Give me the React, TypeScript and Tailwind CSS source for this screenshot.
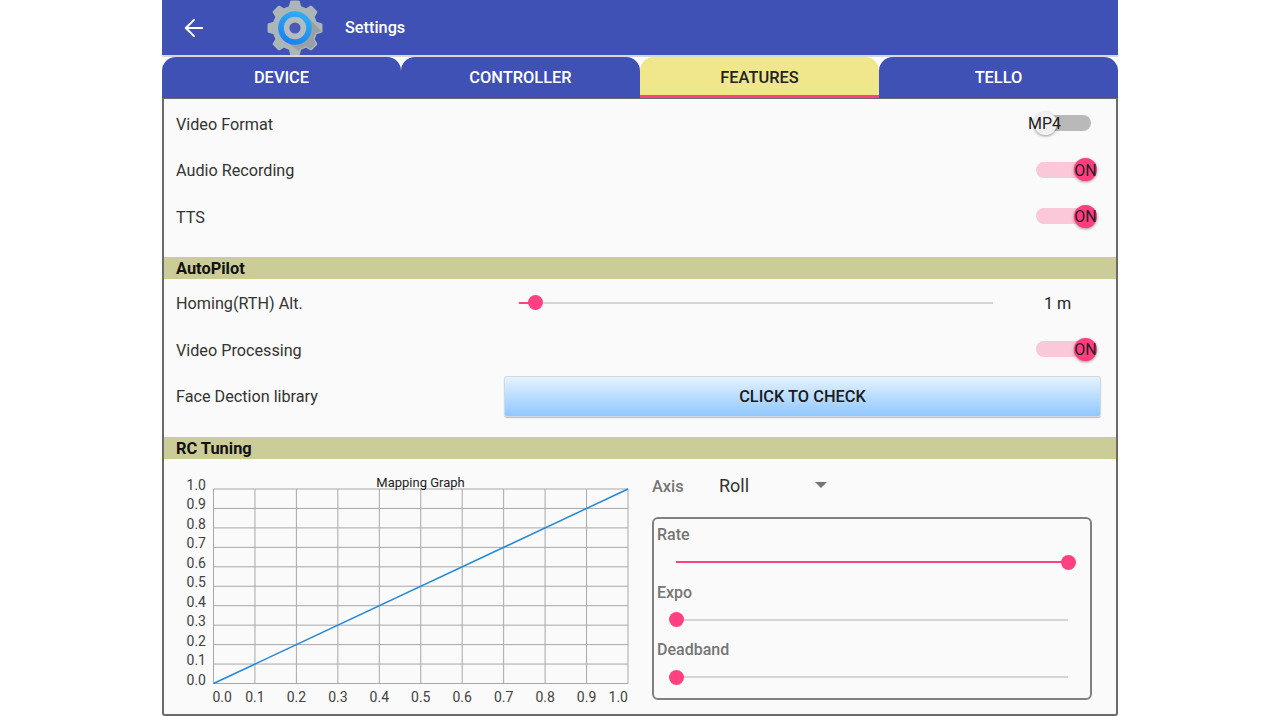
import React from 'react';
import { ArrowLeft } from 'lucide-react';

const FONT = 'font-["Roboto","Liberation_Sans",sans-serif]';

// 8 tooth gear outline around (50,50)
function gearPath() {
  const pts: string[] = [];
  const teeth = 8;
  for (let i = 0; i < teeth; i++) {
    const a = (i / teeth) * Math.PI * 2 - Math.PI / 2;
    const step = (Math.PI * 2) / teeth;
    const add = (r: number, o: number) => {
      pts.push(`${(50 + r * Math.cos(a + o)).toFixed(2)} ${(50 + r * Math.sin(a + o)).toFixed(2)}`);
    };
    add(38, -step * 0.3);
    add(47, -step * 0.17);
    add(47, step * 0.17);
    add(38, step * 0.3);
  }
  return 'M' + pts.join('L') + 'Z';
}

function GearLogo() {
  return (
    <svg viewBox="0 0 100 100" className="w-[56px] h-[56px]">
      <defs>
        <clipPath id="gear-clip">
          <path d={gearPath()} stroke="#000" strokeWidth="4" />
        </clipPath>
        <linearGradient id="ring" x1="0.7" y1="0" x2="0.3" y2="1">
          <stop offset="0" stopColor="#2fb0f7" />
          <stop offset="1" stopColor="#1a7ff0" />
        </linearGradient>
      </defs>
      <path d={gearPath()} fill="#abb6b9" stroke="#abb6b9" strokeWidth="5" strokeLinejoin="round" />
      <path d="M70 28 L100 58 L100 100 L70 100 L30 72 Z" fill="#8e999d" opacity="0.7" clipPath="url(#gear-clip)" />
      <circle cx="50" cy="50" r="30" fill="url(#ring)" />
      <circle cx="50" cy="50" r="20" fill="#b3bdc1" />
      <circle cx="50" cy="50" r="10" fill="#4c5ab3" />
    </svg>
  );
}

function Toggle({ label, on }: { label: string; on: boolean }) {
  return (
    <div className="relative w-[55px] h-4 mr-[25px] mt-[-2px]">
      <div className={`h-4 w-full rounded-full ${on ? 'bg-[#fac8d9]' : 'bg-[#b9b9b9]'}`} />
      <div
        className={`absolute top-[-3.5px] w-[23px] h-[23px] rounded-full shadow-[0_1px_3px_rgba(0,0,0,0.4)] flex items-center justify-center ${
          on ? 'left-[38px] bg-[#ff3d7f]' : 'left-[-2px] bg-[#f1f1f1]'
        }`}
      >
        <span className={`pt-[2px] text-[16px] leading-none text-[#212121] whitespace-nowrap ${on ? '' : 'ml-[-2px]'}`}>
          {label}
        </span>
      </div>
    </div>
  );
}

function Row({ label, children }: { label: string; children?: React.ReactNode }) {
  return (
    <div className="h-[46.5px] flex items-center justify-between pl-[12px]">
      <span className="pt-[1px] text-[16.2px] text-[#333333]">{label}</span>
      {children}
    </div>
  );
}

function Band({ label }: { label: string }) {
  return (
    <div className="h-[22px] bg-[#cccc99] pl-[12px] flex items-center">
      <span className="pt-[2px] text-[16.4px] font-bold text-[#111111]">{label}</span>
    </div>
  );
}

function Slider({ value }: { value: number }) {
  return (
    <div className="relative w-full h-[2px] bg-[#d6d6d6]">
      <div className="absolute left-0 top-0 h-full bg-[#ff4081]" style={{ width: `${value}%` }} />
      <div
        className="absolute rounded-full bg-[#ff4081] top-[-6.5px] w-[15px] h-[15px]"
        style={{ left: `calc(${value}% - 7.5px)` }}
      />
    </div>
  );
}

function LabeledSlider({ label, value }: { label: string; value: number }) {
  return (
    <div className="h-[57.5px] px-[3px]">
      <div className="text-[16px] font-medium leading-5 text-[#757575]">{label}</div>
      <div className="ml-[19px] mr-[19px] mt-[16px]">
        <Slider value={value} />
      </div>
    </div>
  );
}

const GX = (v: number) => 49.5 + v * 414.5;
const GY = (v: number) => 30 + (1 - v) * 194.5;
const TICKS = [0, 0.1, 0.2, 0.3, 0.4, 0.5, 0.6, 0.7, 0.8, 0.9, 1];

function MappingGraph() {
  return (
    <svg width="480" height="255" className="shrink-0" style={{ fontFamily: 'Roboto, sans-serif' }}>
      {TICKS.map((t) => (
        <g key={t}>
          <line x1={GX(t)} x2={GX(t)} y1={GY(1)} y2={GY(0)} stroke="#a8a8a8" strokeWidth="1" />
          <line x1={GX(0)} x2={GX(1)} y1={GY(t)} y2={GY(t)} stroke="#a8a8a8" strokeWidth="1" />
          <text x={42} y={GY(t) + 1} textAnchor="end" fontSize="14" fill="#424242">
            {t.toFixed(1)}
          </text>
          <text
            x={t === 0 ? GX(0) - 1 : GX(t)}
            y={243}
            textAnchor={t === 0 ? 'start' : t === 1 ? 'end' : 'middle'}
            fontSize="14"
            fill="#424242"
          >
            {t.toFixed(1)}
          </text>
        </g>
      ))}
      <line x1={GX(0)} y1={GY(0)} x2={GX(1)} y2={GY(1)} stroke="#1f88d8" strokeWidth="1.5" />
      <text x={256.5} y={28} textAnchor="middle" fontSize="13" fill="#222222">
        Mapping Graph
      </text>
    </svg>
  );
}

export default function App() {
  const tabs = ['DEVICE', 'CONTROLLER', 'FEATURES', 'TELLO'];
  return (
    <div className={`${FONT} w-[1280px] h-[720px] bg-white flex justify-center overflow-hidden`}>
      <div className="w-[956px] h-[720px] flex flex-col">
        <header className="h-[55px] bg-[#3f51b5] flex items-center text-white overflow-hidden shrink-0">
          <ArrowLeft className="ml-[18px] w-[28px] h-[28px]" strokeWidth={1.7} />
          <div className="ml-[59px] w-[56px] h-[56px] shrink-0">
            <GearLogo />
          </div>
          <span className="ml-[22px] pt-[2px] text-[16.3px] font-medium">Settings</span>
        </header>
        <div className="h-[2px] bg-[#d8d8d8] shrink-0" />
        <nav className="h-[41px] grid grid-cols-4 shrink-0">
          {tabs.map((t) => (
            <div
              key={t}
              className={`relative rounded-t-[14px] pt-[2px] flex items-center justify-center text-[16.4px] font-medium ${
                t === 'FEATURES' ? 'bg-[#f0e68c] text-[#222222]' : 'bg-[#3f51b5] text-white'
              }`}
            >
              {t}
              {t === 'FEATURES' && <div className="absolute inset-x-0 bottom-0 h-[3px] bg-[#ff4081]" />}
            </div>
          ))}
        </nav>
        <main className="h-[618px] bg-[#fafafa] border-x-2 border-t border-b-2 border-[#6a6a6a] rounded-b-[3px] flex flex-col shrink-0 overflow-hidden">
          <div className="pt-[2px]">
            <Row label="Video Format">
              <Toggle label="MP4" on={false} />
            </Row>
            <Row label="Audio Recording">
              <Toggle label="ON" on />
            </Row>
            <Row label="TTS">
              <Toggle label="ON" on />
            </Row>
          </div>
          <div className="mt-[16.5px] mb-[1.5px]">
            <Band label="AutoPilot" />
          </div>
          <Row label="Homing(RTH) Alt.">
            <div className="w-[474px] ml-auto mr-[51px] mt-[-2px]">
              <Slider value={3.4} />
            </div>
            <span className="w-[72px] text-[16.2px] text-[#222222]">1 m</span>
          </Row>
          <Row label="Video Processing">
            <Toggle label="ON" on />
          </Row>
          <Row label="Face Dection library">
            <button className="w-[597px] h-[41px] mr-[15px] pt-[2px] rounded-[3px] border border-[#cfd8e3] bg-gradient-to-b from-[#e6f2ff] to-[#8fc7fd] shadow-[0_1px_1px_rgba(0,0,0,0.25)] text-[16.4px] font-medium text-[#1a1a1a]">
              CLICK TO CHECK
            </button>
          </Row>
          <div className="mt-[17px]">
            <Band label="RC Tuning" />
          </div>
          <div className="flex">
            <MappingGraph />
            <div className="ml-[8px] w-[440px]">
              <div className="h-[58px] flex items-center">
                <span className="w-[67px] text-[16.4px] font-medium text-[#757575] mt-[-1px]">Axis</span>
                <span className="w-[96px] text-[18px] text-[#333333] mt-[-6px]">Roll</span>
                <div className="w-0 h-0 mt-[-6px] border-x-[6px] border-x-transparent border-t-[6px] border-t-[#757575]" />
              </div>
              <div className="h-[183px] border-2 border-[#808080] rounded-[6px] pt-[6px]">
                <LabeledSlider label="Rate" value={100} />
                <LabeledSlider label="Expo" value={0} />
                <LabeledSlider label="Deadband" value={0} />
              </div>
            </div>
          </div>
        </main>
      </div>
    </div>
  );
}
